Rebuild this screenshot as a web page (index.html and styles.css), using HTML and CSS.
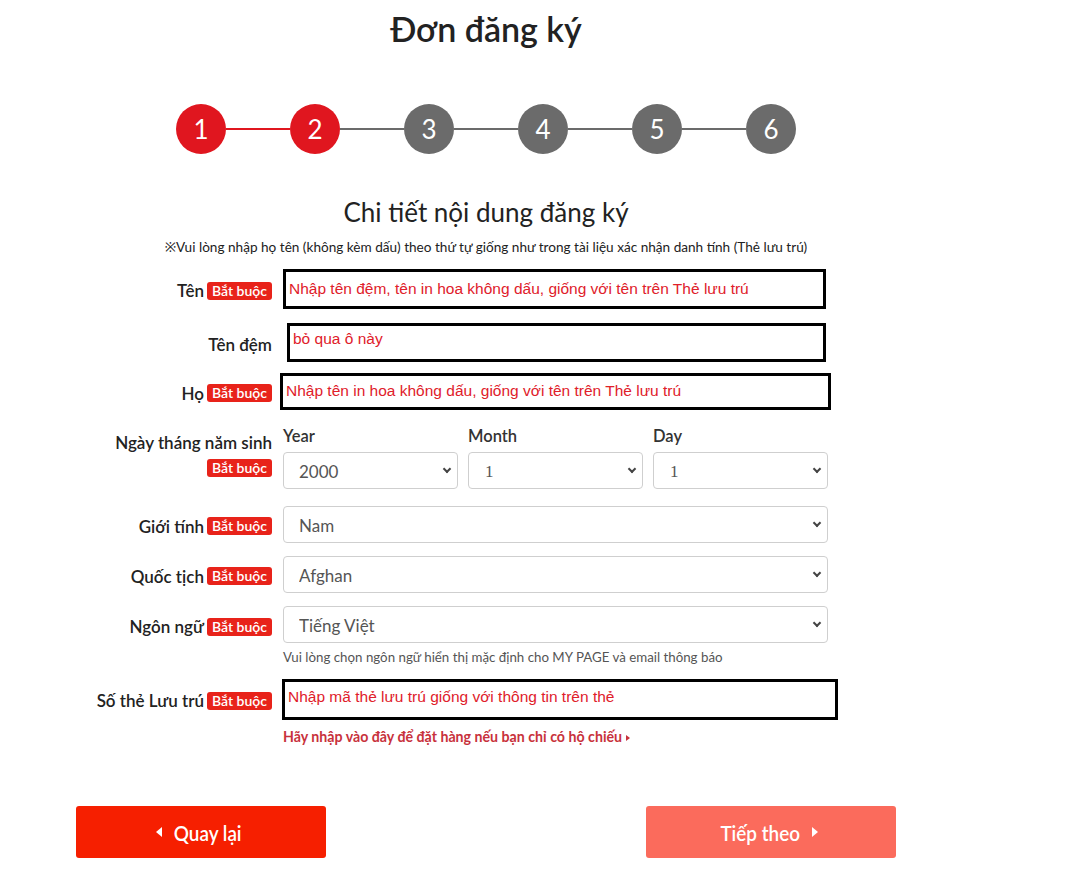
FILE: index.html
```html
<!DOCTYPE html>
<html lang="vi">
<head>
<meta charset="utf-8">
<title>Đơn đăng ký</title>
<link rel="stylesheet" href="styles.css">
</head>
<body>
<main class="page">
  <h1 class="title">Đơn đăng ký</h1>

  <ol class="stepper">
    <li class="step done">1</li>
    <li class="bar done"></li>
    <li class="step done">2</li>
    <li class="bar"></li>
    <li class="step">3</li>
    <li class="bar"></li>
    <li class="step">4</li>
    <li class="bar"></li>
    <li class="step">5</li>
    <li class="bar"></li>
    <li class="step">6</li>
  </ol>

  <h2 class="subtitle">Chi tiết nội dung đăng ký</h2>
  <p class="note">※Vui lòng nhập họ tên (không kèm dấu) theo thứ tự giống như trong tài liệu xác nhận danh tính (Thẻ lưu trú)</p>

  <form class="form">
    <div class="row row-first">
      <div class="label"><span class="label-text">Tên</span><span class="badge">Bắt buộc</span></div>
      <div class="field"><input class="box box-first" type="text" placeholder="Nhập tên đệm, tên in hoa không dấu, giống với tên trên Thẻ lưu trú"></div>
    </div>

    <div class="row row-middle">
      <div class="label"><span class="label-text">Tên đệm</span></div>
      <div class="field"><input class="box box-middle" type="text" placeholder="bỏ qua ô này"></div>
    </div>

    <div class="row row-last">
      <div class="label"><span class="label-text">Họ</span><span class="badge">Bắt buộc</span></div>
      <div class="field"><input class="box box-last" type="text" placeholder="Nhập tên in hoa không dấu, giống với tên trên Thẻ lưu trú"></div>
    </div>

    <div class="row row-birth">
      <div class="label label-stack"><span class="label-text">Ngày tháng năm sinh</span><span class="badge">Bắt buộc</span></div>
      <div class="field date-group">
        <div class="date-col">
          <span class="date-label">Year</span>
          <div class="select-wrap"><select class="select"><option>2000</option></select></div>
        </div>
        <div class="date-col">
          <span class="date-label">Month</span>
          <div class="select-wrap"><select class="select select-num"><option>1</option></select></div>
        </div>
        <div class="date-col">
          <span class="date-label">Day</span>
          <div class="select-wrap"><select class="select select-num"><option>1</option></select></div>
        </div>
      </div>
    </div>

    <div class="row row-select">
      <div class="label"><span class="label-text">Giới tính</span><span class="badge">Bắt buộc</span></div>
      <div class="field"><div class="select-wrap"><select class="select"><option>Nam</option></select></div></div>
    </div>

    <div class="row row-select">
      <div class="label"><span class="label-text">Quốc tịch</span><span class="badge">Bắt buộc</span></div>
      <div class="field"><div class="select-wrap"><select class="select"><option>Afghan</option></select></div></div>
    </div>

    <div class="row row-select row-lang">
      <div class="label label-top"><span class="label-text">Ngôn ngữ</span><span class="badge">Bắt buộc</span></div>
      <div class="field">
        <div class="select-wrap"><select class="select"><option>Tiếng Việt</option></select></div>
        <p class="help">Vui lòng chọn ngôn ngữ hiển thị mặc định cho MY PAGE và email thông báo</p>
      </div>
    </div>

    <div class="row row-card">
      <div class="label label-top label-card"><span class="label-text">Số thẻ Lưu trú</span><span class="badge">Bắt buộc</span></div>
      <div class="field">
        <input class="box box-card" type="text" placeholder="Nhập mã thẻ lưu trú giống với thông tin trên thẻ">
        <a class="passport-link" href="#">Hãy nhập vào đây để đặt hàng nếu bạn chỉ có hộ chiếu <span class="tri-right small"></span></a>
      </div>
    </div>
  </form>

  <div class="actions">
    <button class="btn btn-back" type="button"><span class="tri-left"></span><span class="btn-text">Quay lại</span></button>
    <button class="btn btn-next" type="button"><span class="btn-text">Tiếp theo</span><span class="tri-right"></span></button>
  </div>
</main>
</body>
</html>
```

FILE: styles.css
```css
* { box-sizing: border-box; }

html, body {
  margin: 0;
  padding: 0;
  background: #fff;
}

body {
  font-family: Lato, "Noto Sans", sans-serif;
  color: #222;
}

.page {
  width: 820px;
  margin-left: 76px;
  padding-top: 9px;
}

/* headings */
.title {
  margin: 0;
  text-align: center;
  font-size: 34px;
  line-height: 40px;
  font-weight: 600;
  color: #222;
}

.subtitle {
  margin: 42px 0 0;
  text-align: center;
  font-size: 26px;
  line-height: 32px;
  font-weight: 400;
  color: #222;
}

.note {
  margin: 10px 0 0;
  text-align: center;
  font-size: 13.6px;
  line-height: 18px;
  color: #222;
}

/* step indicator */
.stepper {
  list-style: none;
  margin: 55px 0 0;
  padding: 0;
  display: flex;
  justify-content: center;
  align-items: center;
}

.step {
  width: 50px;
  height: 50px;
  border-radius: 50%;
  background: #6b6b6b;
  color: #fff;
  font-size: 26px;
  line-height: 50px;
  text-align: center;
}

.step.done { background: #e0161f; }

.bar {
  width: 64px;
  height: 2px;
  background: #6b6b6b;
}

.bar.done { background: #e0161f; }

/* form rows */
.form {
  margin-top: 13px;
}

.row {
  display: grid;
  grid-template-columns: 196px 545px;
  column-gap: 11px;
  align-items: center;
}

.label {
  display: flex;
  justify-content: flex-end;
  align-items: center;
  gap: 3px;
  padding-top: 3px;
}

.label-text {
  font-size: 17px;
  font-weight: 600;
  color: #222;
  white-space: nowrap;
}

.badge {
  display: inline-block;
  background: #e8231a;
  color: #fff;
  font-size: 14px;
  font-weight: 600;
  line-height: 18px;
  padding: 0 5px;
  border-radius: 3px;
  white-space: nowrap;
}

.label-stack {
  flex-direction: column;
  align-items: flex-end;
  gap: 6px;
  padding-top: 5px;
}

.label-top {
  align-self: start;
  padding-top: 10px;
}

.label-card {
  padding-top: 11px;
}

/* text inputs, outlined */
.box {
  display: block;
  width: 100%;
  border: 3px solid #000;
  background: #fff;
  font-family: "Liberation Sans", Arial, sans-serif;
  font-size: 15.5px;
  color: #e0202a;
  padding: 0 0 0 3px;
  outline: none;
}

.box::placeholder {
  color: #e0202a;
  opacity: 1;
}

.box-first {
  height: 40px;
  width: 543px;
  padding-bottom: 0;
}

.box-middle {
  height: 39px;
  width: 539px;
  margin-left: 4px;
  padding-bottom: 8px;
}

.box-last {
  height: 37px;
  width: 551px;
  margin-left: -3px;
  padding-bottom: 1px;
}

.box-card {
  height: 41px;
  width: 556px;
  margin-left: -1px;
  padding-bottom: 5px;
}

.row-middle { margin-top: 14px; }
.row-last { margin-top: 11px; }
.row-birth { margin-top: 17px; align-items: start; }
.row-select { margin-top: 13px; }
.row-birth + .row-select { margin-top: 17px; }
.row-card { margin-top: 14px; align-items: start; }

/* selects */
.select-wrap {
  position: relative;
}

.select-wrap::after {
  content: "";
  position: absolute;
  right: 8px;
  top: 14px;
  width: 4px;
  height: 4px;
  border-right: 2px solid #444;
  border-bottom: 2px solid #444;
  transform: rotate(45deg);
  pointer-events: none;
}

.select {
  -webkit-appearance: none;
  appearance: none;
  display: block;
  width: 100%;
  height: 37px;
  border: 1px solid #cfcfcf;
  border-radius: 4px;
  background: #fff;
  font-family: Lato, "Noto Sans", sans-serif;
  font-size: 17px;
  color: #555;
  padding: 2px 0 0 15px;
  outline: none;
}

.select-num {
  font-family: "Liberation Serif", serif;
  padding-left: 16px;
}

.date-group {
  display: grid;
  grid-template-columns: 175px 175px 175px;
  column-gap: 10px;
}

.date-col {
  display: flex;
  flex-direction: column;
  gap: 7px;
}

.date-label {
  font-size: 16.5px;
  font-weight: 600;
  line-height: 18px;
  color: #333;
}

.help {
  margin: 6px 0 0;
  font-size: 13.3px;
  line-height: 16px;
  color: #555;
}

.passport-link {
  display: inline-block;
  margin-top: 9px;
  font-size: 14.2px;
  font-weight: 700;
  line-height: 16px;
  color: #c8323c;
  text-decoration: none;
}

/* triangles */
.tri-left,
.tri-right {
  display: inline-block;
  width: 0;
  height: 0;
  border-top: 5px solid transparent;
  border-bottom: 5px solid transparent;
}

.tri-left { border-right: 6px solid #fff; }
.tri-right { border-left: 6px solid #fff; }

.tri-right.small {
  border-top-width: 3px;
  border-bottom-width: 3px;
  border-left: 4px solid #c8323c;
  vertical-align: 1px;
}

/* buttons */
.actions {
  margin-top: 61px;
  display: flex;
  justify-content: space-between;
}

.btn {
  width: 250px;
  height: 52px;
  border: none;
  border-radius: 3px;
  color: #fff;
  font-family: Lato, "Noto Sans", sans-serif;
  font-size: 21px;
  font-weight: 600;
  display: flex;
  align-items: center;
  justify-content: center;
  gap: 8px;
  cursor: pointer;
}

.btn-text {
  display: inline-block;
  transform: scaleX(0.9);
}

.btn-back { background: #f61f00; }
.btn-next { background: #fb6b5c; }
.btn-next .btn-text { margin-left: -8px; }
```
